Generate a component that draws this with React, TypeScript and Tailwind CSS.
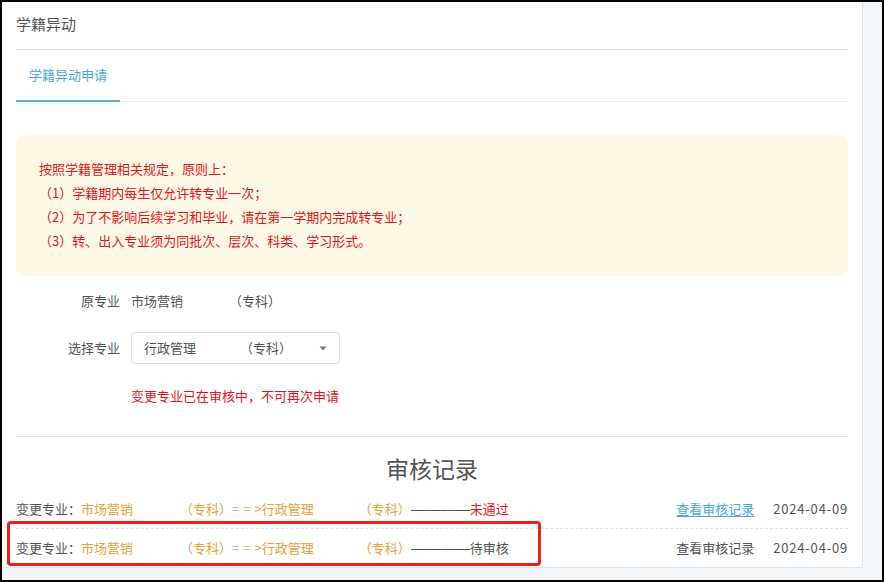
import React from 'react';

const font = { fontFamily: '"Noto Sans CJK SC", "Noto Sans", sans-serif' };

const rules = [
  '按照学籍管理相关规定，原则上：',
  '（1）学籍期内每生仅允许转专业一次；',
  '（2）为了不影响后续学习和毕业，请在第一学期内完成转专业；',
  '（3）转、出入专业须为同批次、层次、科类、学习形式。',
];

function RecordRow({ status, failed }: { status: string; failed?: boolean }) {
  return (
    <div className="flex h-[39px] items-center border-b border-dashed border-[#e2e2e2] text-[13px] text-[#555]">
      <span>变更专业：</span>
      <span className="inline-block w-[99px] text-[#e6a23c]">市场营销</span>
      <span className="text-[#e6a23c]">（专科）</span>
      <span className="tracking-[4px] text-[#e6a23c]">==</span>
      <span className="text-[#e6a23c]">&gt;</span>
      <span className="inline-block w-[97px] text-[#e6a23c]">行政管理</span>
      <span className="text-[#e6a23c]">（专科）</span>
      <span className="inline-block w-[59px] overflow-hidden whitespace-nowrap">
        <span
          className="inline-block origin-left scale-x-[1.14]"
          style={{ fontFamily: '"Liberation Sans", sans-serif' }}
        >
          ————
        </span>
      </span>
      <span className={failed ? 'text-[#e5141b]' : ''}>{status}</span>
      <div className="ml-auto flex items-center gap-[19px]">
        <span className={failed ? 'text-[#4aa8d8] underline underline-offset-2' : ''}>查看审核记录</span>
        <span className="tracking-[0.8px]">2024-04-09</span>
      </div>
    </div>
  );
}

export default function App() {
  return (
    <div className="relative h-[582px] w-[884px] bg-black p-[2px]" style={font}>
      <div className="h-full w-full bg-[#f3f6f9]">
        <div className="h-[566px] w-[861px] border-r border-b border-[#e3e6ea] bg-white pl-[14px] pr-[14px]">
          <div className="flex h-[48px] items-center border-b border-[#e4e4e4] pb-[3px] text-[15px] text-[#555]">
            学籍异动
          </div>

          <div className="flex border-b border-[#e4e7ed]">
            <div className="-mb-px flex h-[52px] items-center border-b-2 border-[#5bb3dc] px-[13px] text-[13px] text-[#4aa8d8]">
              学籍异动申请
            </div>
          </div>

          <div className="mt-[32px] h-[142px] rounded-[10px] bg-[#fef8e6] pl-[23px] pt-[23px] text-[13px] leading-[24px] text-[#e5141b]">
            {rules.map((r) => (
              <div key={r}>{r}</div>
            ))}
          </div>

          <div className="mt-[9px] flex h-[32px] items-center text-[13px] text-[#555]">
            <span className="w-[105px] pr-[1px] text-right">原专业</span>
            <span className="ml-[10px] inline-block w-[98px]">市场营销</span>
            <span>（专科）</span>
          </div>

          <div className="mt-[15px] flex h-[32px] items-center text-[13px] text-[#555]">
            <span className="w-[105px] pr-[1px] text-right">选择专业</span>
            <div className="ml-[10px] flex h-[32px] w-[209px] items-center rounded-[4px] border border-[#dcdfe6] pl-[12px] pr-[12px]">
              <span className="inline-block w-[96px]">行政管理</span>
              <span>（专科）</span>
              <svg className="ml-auto" width="8" height="5" viewBox="0 0 8 5">
                <path d="M0.5 0.5 L7.5 0.5 L4 4.5 Z" fill="#777" />
              </svg>
            </div>
          </div>

          <div className="mt-[22px] flex h-[20px] items-center pl-[115px] text-[13px] text-[#e5141b]">
            变更专业已在审核中，不可再次申请
          </div>

          <div className="mt-[30px] border-t border-[#e4e4e4]" />

          <div className="mt-[15px] flex h-[32px] items-center justify-center text-[23px] text-[#555]">
            审核记录
          </div>

          <div className="mt-[6px]">
            <RecordRow status="未通过" failed />
            <RecordRow status="待审核" />
          </div>
        </div>
      </div>

      <div className="absolute left-[7px] top-[521px] h-[45px] w-[534px] rounded-[4px] border-[3px] border-[#e8211b]" />
    </div>
  );
}
